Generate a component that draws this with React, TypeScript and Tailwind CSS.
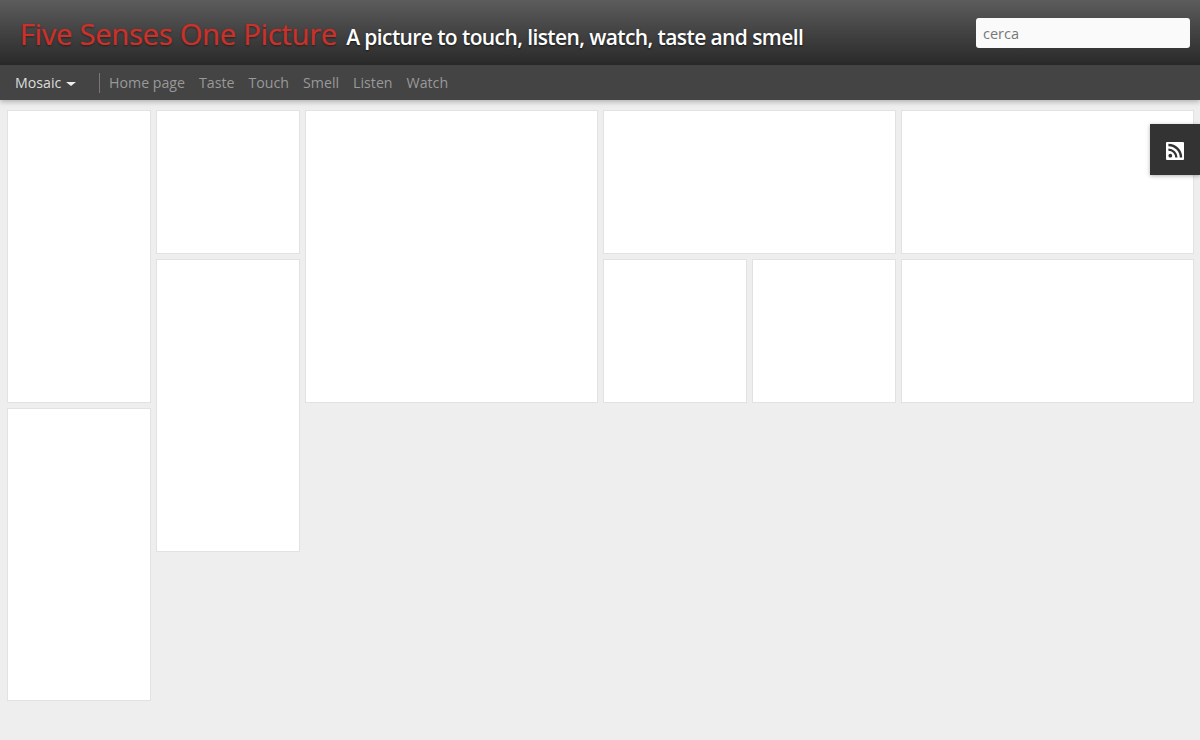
const links = ['Home page', 'Taste', 'Touch', 'Smell', 'Listen', 'Watch'];

// placement on the 8-column mosaic, the tiles are still empty in the picture
const tiles = [
  'row-span-2',
  '',
  'col-span-2 row-span-2',
  'col-span-2',
  'col-span-2',
  'col-start-2 row-span-2',
  'col-start-5 row-start-2',
  'col-start-6 row-start-2',
  'col-span-2 col-start-7 row-start-2',
  'col-start-1 row-start-3 row-span-2',
];

function RssIcon() {
  return (
    <svg viewBox="0 0 18 18" className="h-[18px] w-[18px]">
      <rect width="18" height="18" rx="1" fill="white" />
      <circle cx="4.3" cy="13.7" r="1.9" fill="#333333" />
      <path d="M2.4 7.6a8 8 0 0 1 8 8" fill="none" stroke="#333333" strokeWidth="2.3" />
      <path d="M2.4 3a12.6 12.6 0 0 1 12.6 12.6" fill="none" stroke="#333333" strokeWidth="2.4" />
    </svg>
  );
}

export default function App() {
  return (
    <div className="relative min-h-[740px] bg-[#eeeeee] font-['Open_Sans',sans-serif]">
      <header className="flex h-[65px] items-center justify-between bg-gradient-to-b from-[#5c5c5c] to-[#2a2a2a] pl-[20px] pr-[10px]">
        <div className="flex items-baseline gap-[9px] pt-[1px]">
          <h1 className="text-[29px] leading-none tracking-[-0.17px] text-[#c9322a] [text-shadow:0_0_1px_rgba(201,48,44,0.8),0_1px_2px_rgba(0,0,0,0.5)]">
            Five Senses One Picture
          </h1>
          <h2 className="text-[21px] font-semibold leading-none tracking-[-0.6px] text-white [text-shadow:0_1px_2px_rgba(0,0,0,0.6)]">
            A picture to touch, listen, watch, taste and smell
          </h2>
        </div>
        <input
          placeholder="cerca"
          className="h-[30px] w-[214px] rounded-[3px] bg-[#fafafa] px-[7px] pt-[2px] text-[14.5px] text-[#777777] outline-none placeholder:text-[#777777]"
        />
      </header>

      <nav className="flex h-[35px] items-center bg-[#444444] pl-[15px] text-[14.2px] shadow-[0_2px_5px_rgba(0,0,0,0.25)]">
        <div className="flex w-[84px] items-center gap-[5px] text-[#dddddd]">
          Mosaic
          <span className="mt-[3px] h-0 w-0 border-x-[5px] border-t-[4px] border-x-transparent border-t-[#eeeeee]" />
        </div>
        <div className="flex h-[20px] items-center gap-[14px] border-l border-[#777777] pl-[9px] text-[#999999]">
          {links.map((link) => (
            <a key={link}>{link}</a>
          ))}
        </div>
      </nav>

      <main className="grid grid-cols-[repeat(8,144px)] auto-rows-[144px] gap-[5px] pl-[7px] pt-[10px]">
        {tiles.map((cls, i) => (
          <div key={i} className={`border border-[#e2e2e2] bg-white ${cls}`} />
        ))}
      </main>

      <a className="absolute right-0 top-[124px] flex h-[51px] w-[50px] items-center justify-center bg-[#333333] pt-[3px] shadow-[0_1px_4px_rgba(0,0,0,0.3)]">
        <RssIcon />
      </a>
    </div>
  );
}
